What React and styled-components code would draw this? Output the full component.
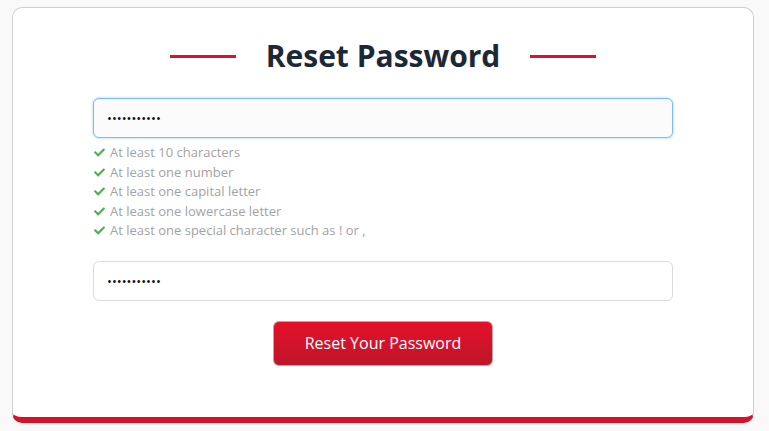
import React from "react";
import styled, { createGlobalStyle } from "styled-components";
import { FaCheck } from "react-icons/fa";

const Global = createGlobalStyle`
  html, body { margin: 0; padding: 0; background: #f9f9f9; }
  body { font-family: "Open Sans", "Liberation Sans", sans-serif; }
  * { box-sizing: border-box; }
`;

const Page = styled.div`
  padding: 7px 15px 0 12px;
`;

const Card = styled.div`
  width: 742px;
  background: #fff;
  border: 1px solid #cfcfcf;
  border-bottom: 6px solid #d5112b;
  border-radius: 10px;
  padding: 23px 0 51px;
  display: flex;
  flex-direction: column;
  align-items: center;
`;

const TitleRow = styled.div`
  display: flex;
  align-items: center;
  gap: 30px;
  height: 50px;
`;

const Rule = styled.span`
  width: 66px;
  height: 3px;
  background: #e0102a;
`;

const Title = styled.h1`
  margin: 0;
  font-size: 30px;
  font-weight: 700;
  color: #1b2838;
  line-height: 1;
`;

const Form = styled.div`
  width: 580px;
  margin-top: 17px;
  display: flex;
  flex-direction: column;
`;

const Input = styled.input`
  width: 100%;
  height: 40px;
  padding: 0 13px;
  border-radius: 6px;
  font-family: "Open Sans", sans-serif;
  font-size: 13px;
  color: #111;
  outline: none;
  border: 1px solid ${(p) => (p.$focused ? "#7cbcf6" : "#dcdcdc")};
  background: ${(p) => (p.$focused ? "#fbfbfb" : "#fff")};
  box-shadow: ${(p) => (p.$focused ? "0 0 3px rgba(102,175,233,0.6)" : "none")};
  caret-color: #000;
`;

const Rules = styled.ul`
  list-style: none;
  margin: 5px 0 20px;
  padding: 0;
`;

const RuleItem = styled.li`
  display: flex;
  align-items: center;
  gap: 5px;
  font-size: 13px;
  line-height: 19.5px;
  color: #a3a3a3;
  padding-left: 1px;
  svg { color: #4cb34c; width: 11px; height: 11px; flex: none; }
`;

const ButtonRow = styled.div`
  display: flex;
  justify-content: center;
  margin-top: 20px;
`;

const Button = styled.button`
  width: 220px;
  height: 45px;
  border-radius: 6px;
  border: 1px solid #c9a0a6;
  background: linear-gradient(to bottom, #e5102b, #be1629);
  color: #fff;
  font-family: "Open Sans", sans-serif;
  font-size: 16px;
  cursor: pointer;
`;

const rules = [
  "At least 10 characters",
  "At least one number",
  "At least one capital letter",
  "At least one lowercase letter",
  "At least one special character such as ! or ,",
];

export default function App() {
  return (
    <Page>
      <Global />
      <Card>
        <TitleRow>
          <Rule />
          <Title>Reset Password</Title>
          <Rule />
        </TitleRow>
        <Form>
          <Input type="password" defaultValue="abcdefghijk" $focused autoFocus />
          <Rules>
            {rules.map((r) => (
              <RuleItem key={r}>
                <FaCheck />
                {r}
              </RuleItem>
            ))}
          </Rules>
          <Input type="password" defaultValue="abcdefghijk" />
          <ButtonRow>
            <Button>Reset Your Password</Button>
          </ButtonRow>
        </Form>
      </Card>
    </Page>
  );
}
